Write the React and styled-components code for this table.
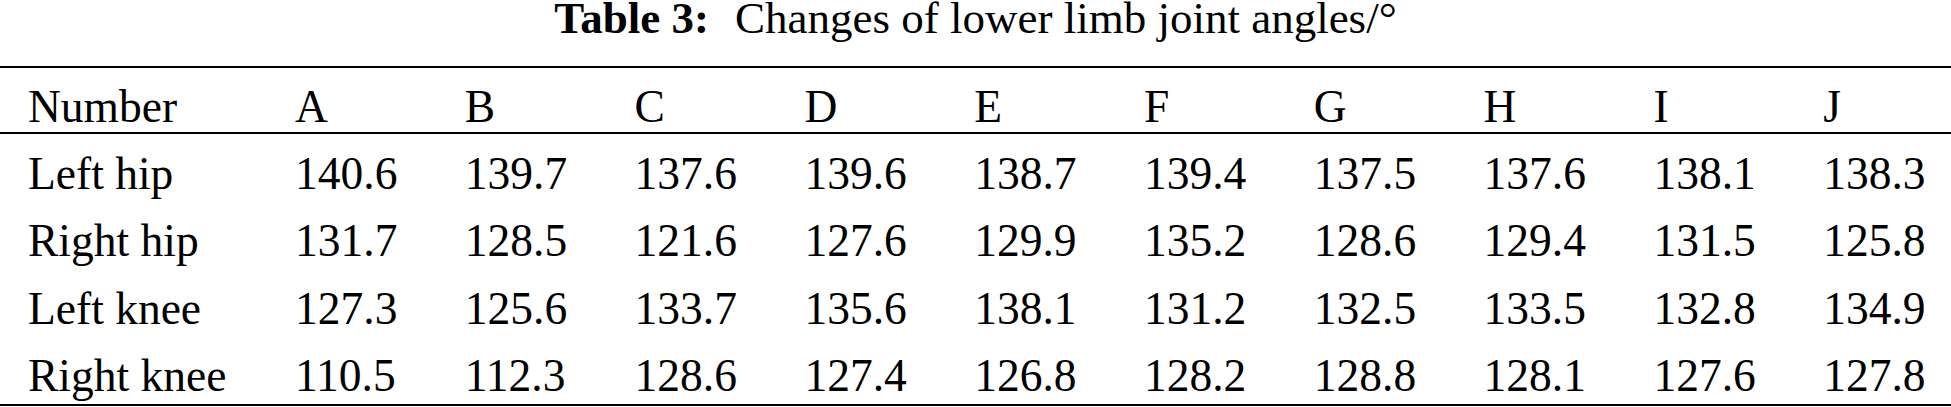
import React from "react";
import styled, { createGlobalStyle } from "styled-components";

const Global = createGlobalStyle`
  html, body { margin: 0; padding: 0; background: #fff; }
  body { font-family: "Liberation Serif", "Times New Roman", serif; color: #000; }
`;

const Page = styled.div`
  width: 1951px;
  height: 407px;
  overflow: hidden;
  display: flex;
  flex-direction: column;
`;

const Caption = styled.div`
  height: 36px;
  line-height: 36px;
  font-size: 45px;
  text-align: center;
  white-space: nowrap;
`;

const Label = styled.b`
  font-weight: 700;
  margin-right: 26px;
`;

const Table = styled.div`
  margin-top: 30px;
  border-top: 2px solid #000;
  border-bottom: 2px solid #000;
`;

const Row = styled.div`
  display: grid;
  grid-template-columns: 295px repeat(9, 169.8px) 1fr;
  box-sizing: border-box;
  height: ${(p) => p.$h}px;
  padding-top: ${(p) => p.$pt}px;
  align-items: center;
  font-size: 45.5px;
  line-height: 46px;
  border-bottom: ${(p) => (p.$rule ? "2px solid #000" : "none")};
`;

const Cell = styled.div`
  white-space: nowrap;
  padding-left: ${(p) => (p.$first ? "28px" : "0")};
`;

const headers = ["Number", "A", "B", "C", "D", "E", "F", "G", "H", "I", "J"];
const rows = [
  ["Left hip", "140.6", "139.7", "137.6", "139.6", "138.7", "139.4", "137.5", "137.6", "138.1", "138.3"],
  ["Right hip", "131.7", "128.5", "121.6", "127.6", "129.9", "135.2", "128.6", "129.4", "131.5", "125.8"],
  ["Left knee", "127.3", "125.6", "133.7", "135.6", "138.1", "131.2", "132.5", "133.5", "132.8", "134.9"],
  ["Right knee", "110.5", "112.3", "128.6", "127.4", "126.8", "128.2", "128.8", "128.1", "127.6", "127.8"],
];

export default function App() {
  return (
    <Page>
      <Global />
      <Caption>
        <Label>Table 3:</Label>Changes of lower limb joint angles/°
      </Caption>
      <Table>
        <Row $h={66} $pt={14} $rule>
          {headers.map((h, i) => (
            <Cell key={h} $first={i === 0}>{h}</Cell>
          ))}
        </Row>
        {rows.map((r) => (
          <Row key={r[0]} $h={67.5} $pt={12}>
            {r.map((v, i) => (
              <Cell key={i} $first={i === 0}>{v}</Cell>
            ))}
          </Row>
        ))}
      </Table>
    </Page>
  );
}
